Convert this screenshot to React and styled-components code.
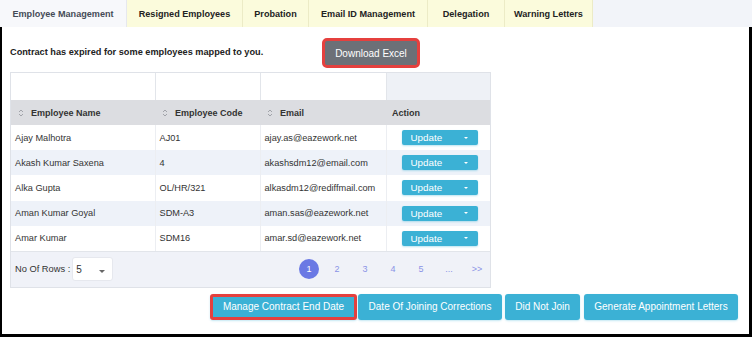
import React from 'react';
import styled, { createGlobalStyle } from 'styled-components';

const GlobalStyle = createGlobalStyle`
  html, body {
    margin: 0;
    padding: 0;
    background: #ffffff;
    font-family: "Liberation Sans", Arial, sans-serif;
  }
`;

const Page = styled.div`
  width: 752px;
  height: 337px;
  display: flex;
  flex-direction: column;
  overflow: hidden;
`;

const TabBar = styled.div`
  display: flex;
  height: 27px;
  background: #f2f4f9;
  flex-shrink: 0;
`;

const Tab = styled.div`
  display: flex;
  align-items: center;
  justify-content: center;
  width: ${p => p.w}px;
  font-size: 9.1px;
  font-weight: bold;
  color: ${p => (p.active ? '#454b57' : '#222')};
  background: ${p => (p.active ? '#f7f8fb' : '#fbfbdc')};
  border-right: 1px solid ${p => (p.active ? '#e6e8ee' : '#ecebc6')};
  box-sizing: border-box;
`;

const Body = styled.div`
  flex: 1;
  border-left: 2px solid #000;
  border-right: 3px solid #000;
  border-bottom: 3px solid #000;
  padding: 11px 8px 0 8px;
  display: flex;
  flex-direction: column;
`;

const NoticeRow = styled.div`
  display: flex;
  align-items: center;
  height: 30px;
`;

const Notice = styled.div`
  width: 252px;
  font-size: 9.2px;
  font-weight: bold;
  color: #222;
  margin-top: -3px;
  white-space: nowrap;
`;

const ExcelButton = styled.button`
  margin-left: 60px;
  width: 98px;
  height: 30px;
  border: 3px solid #e5403e;
  border-radius: 5px;
  background: #6c7077;
  color: #fff;
  font-family: "Liberation Sans", Arial, sans-serif;
  font-size: 10px;
  padding: 0;
`;

const TableWrap = styled.div`
  margin-top: 4px;
  width: 481px;
  border: 1px solid #dfe2e8;
  box-sizing: border-box;
`;

const Table = styled.table`
  width: 100%;
  table-layout: fixed;
  border-collapse: collapse;
  font-size: 9.2px;
  color: #333;
`;

const FilterCell = styled.td`
  height: 27px;
  padding: 0;
  border-right: 1px solid #e2e5ea;
  background: ${p => (p.shade ? '#eef1f6' : '#fff')};
  &:last-child { border-right: none; }
`;

const HeadCell = styled.th`
  height: 25px;
  padding: 0 0 0 ${p => (p.plain ? 6 : 7)}px;
  background: #dcdde1;
  text-align: left;
  font-weight: bold;
  font-size: 9px;
  color: #333;
  white-space: nowrap;
`;

const SortIcon = styled.svg`
  width: 6px;
  height: 8px;
  margin-right: 7px;
  vertical-align: -1px;
`;

const Row = styled.tr`
  background: ${p => (p.alt ? '#eef2f9' : '#fff')};
`;

const Cell = styled.td`
  height: 25.2px;
  padding: 0 0 0 4px;
  border-right: 1px solid #eceef2;
  white-space: nowrap;
  &:last-child { border-right: none; padding-left: 15px; }
`;

const UpdateButton = styled.button`
  display: flex;
  align-items: center;
  justify-content: space-between;
  width: 76px;
  height: 15px;
  padding: 0 10px 0 9px;
  border: none;
  border-radius: 2px;
  background: #3bb1d5;
  color: #fff;
  font-family: "Liberation Sans", Arial, sans-serif;
  font-size: 9.8px;
  box-shadow: 0 1px 2px rgba(59, 177, 213, 0.35);
`;

const Caret = styled.span`
  width: 0;
  height: 0;
  border-left: 2px solid transparent;
  border-right: 2px solid transparent;
  border-top: 2.5px solid #fff;
`;

const Footer = styled.div`
  height: 35px;
  background: #f0f2f8;
  border-top: 1px solid #e2e5ea;
  display: flex;
  align-items: center;
  padding: 0 3px 0 4px;
`;

const RowsLabel = styled.span`
  font-size: 9.3px;
  color: #333;
`;

const RowsSelect = styled.div`
  margin-left: 2px;
  width: 41px;
  height: 24px;
  background: #fff;
  border: 1px solid #e6e8ee;
  border-radius: 3px;
  box-sizing: border-box;
  display: flex;
  align-items: center;
  justify-content: space-between;
  padding: 0 7px 0 3px;
  font-size: 10px;
  color: #333;
`;

const SelectCaret = styled.span`
  width: 0;
  height: 0;
  margin-top: 4px;
  border-left: 3px solid transparent;
  border-right: 3px solid transparent;
  border-top: 3px solid #666;
`;

const Pager = styled.div`
  margin-left: auto;
  display: flex;
  align-items: center;
  gap: 8px;
`;

const PageItem = styled.div`
  width: 20px;
  height: 20px;
  border-radius: 50%;
  display: flex;
  align-items: center;
  justify-content: center;
  font-size: 9px;
  color: ${p => (p.active ? '#fff' : '#8b93e6')};
  background: ${p => (p.active ? '#6a79e4' : 'transparent')};
`;

const ActionBar = styled.div`
  display: flex;
  justify-content: flex-end;
  margin-top: 6px;
  padding-right: 3px;
`;

const ActionButton = styled.button`
  width: ${p => p.w}px;
  height: 26px;
  margin-left: ${p => p.gap || 0}px;
  padding: 0;
  border: ${p => (p.outlined ? '3px solid #e5403e' : 'none')};
  border-radius: 3px;
  background: #3bb1d5;
  color: #fff;
  font-family: "Liberation Sans", Arial, sans-serif;
  font-size: 10px;
  box-shadow: 0 1px 2px rgba(59, 177, 213, 0.3);
`;

const tabs = [
  { label: 'Employee Management', w: 127, active: true },
  { label: 'Resigned Employees', w: 116 },
  { label: 'Probation', w: 66 },
  { label: 'Email ID Management', w: 119 },
  { label: 'Delegation', w: 77 },
  { label: 'Warning Letters', w: 88 },
];

const employees = [
  ['Ajay Malhotra', 'AJ01', 'ajay.as@eazework.net'],
  ['Akash Kumar Saxena', '4', 'akashsdm12@email.com'],
  ['Alka Gupta', 'OL/HR/321', 'alkasdm12@rediffmail.com'],
  ['Aman Kumar Goyal', 'SDM-A3', 'aman.sas@eazework.net'],
  ['Amar Kumar', 'SDM16', 'amar.sd@eazework.net'],
];

const actions = [
  { label: 'Manage Contract End Date', w: 147, outlined: true },
  { label: 'Date Of Joining Corrections', w: 144, gap: 1 },
  { label: 'Did Not Join', w: 75, gap: 3 },
  { label: 'Generate Appointment Letters', w: 154, gap: 4 },
];

const Sort = () => (
  <SortIcon viewBox="0 0 6 8">
    <path d="M1 3 L3 1 L5 3 M1 5 L3 7 L5 5" fill="none" stroke="#9a9ca3" strokeWidth="0.9" />
  </SortIcon>
);

const App = () => {
  return (
    <Page>
      <GlobalStyle />
      <TabBar>
        {tabs.map(t => (
          <Tab key={t.label} w={t.w} active={t.active}>{t.label}</Tab>
        ))}
      </TabBar>
      <Body>
        <NoticeRow>
          <Notice>Contract has expired for some employees mapped to you.</Notice>
          <ExcelButton>Download Excel</ExcelButton>
        </NoticeRow>
        <TableWrap>
          <Table>
            <colgroup>
              <col style={{ width: 144 }} />
              <col style={{ width: 105 }} />
              <col style={{ width: 126 }} />
              <col />
            </colgroup>
            <tbody>
              <tr>
                <FilterCell />
                <FilterCell />
                <FilterCell />
                <FilterCell shade />
              </tr>
              <tr>
                <HeadCell><Sort />Employee Name</HeadCell>
                <HeadCell><Sort />Employee Code</HeadCell>
                <HeadCell><Sort />Email</HeadCell>
                <HeadCell plain>Action</HeadCell>
              </tr>
              {employees.map((e, i) => (
                <Row key={e[0]} alt={i % 2 === 1}>
                  <Cell>{e[0]}</Cell>
                  <Cell>{e[1]}</Cell>
                  <Cell>{e[2]}</Cell>
                  <Cell>
                    <UpdateButton>Update<Caret /></UpdateButton>
                  </Cell>
                </Row>
              ))}
            </tbody>
          </Table>
          <Footer>
            <RowsLabel>No Of Rows :</RowsLabel>
            <RowsSelect>5<SelectCaret /></RowsSelect>
            <Pager>
              {['1', '2', '3', '4', '5', '...', '>>'].map((p, i) => (
                <PageItem key={p} active={i === 0}>{p}</PageItem>
              ))}
            </Pager>
          </Footer>
        </TableWrap>
        <ActionBar>
          {actions.map(a => (
            <ActionButton key={a.label} w={a.w} gap={a.gap} outlined={a.outlined}>
              {a.label}
            </ActionButton>
          ))}
        </ActionBar>
      </Body>
    </Page>
  );
};

export default App;
